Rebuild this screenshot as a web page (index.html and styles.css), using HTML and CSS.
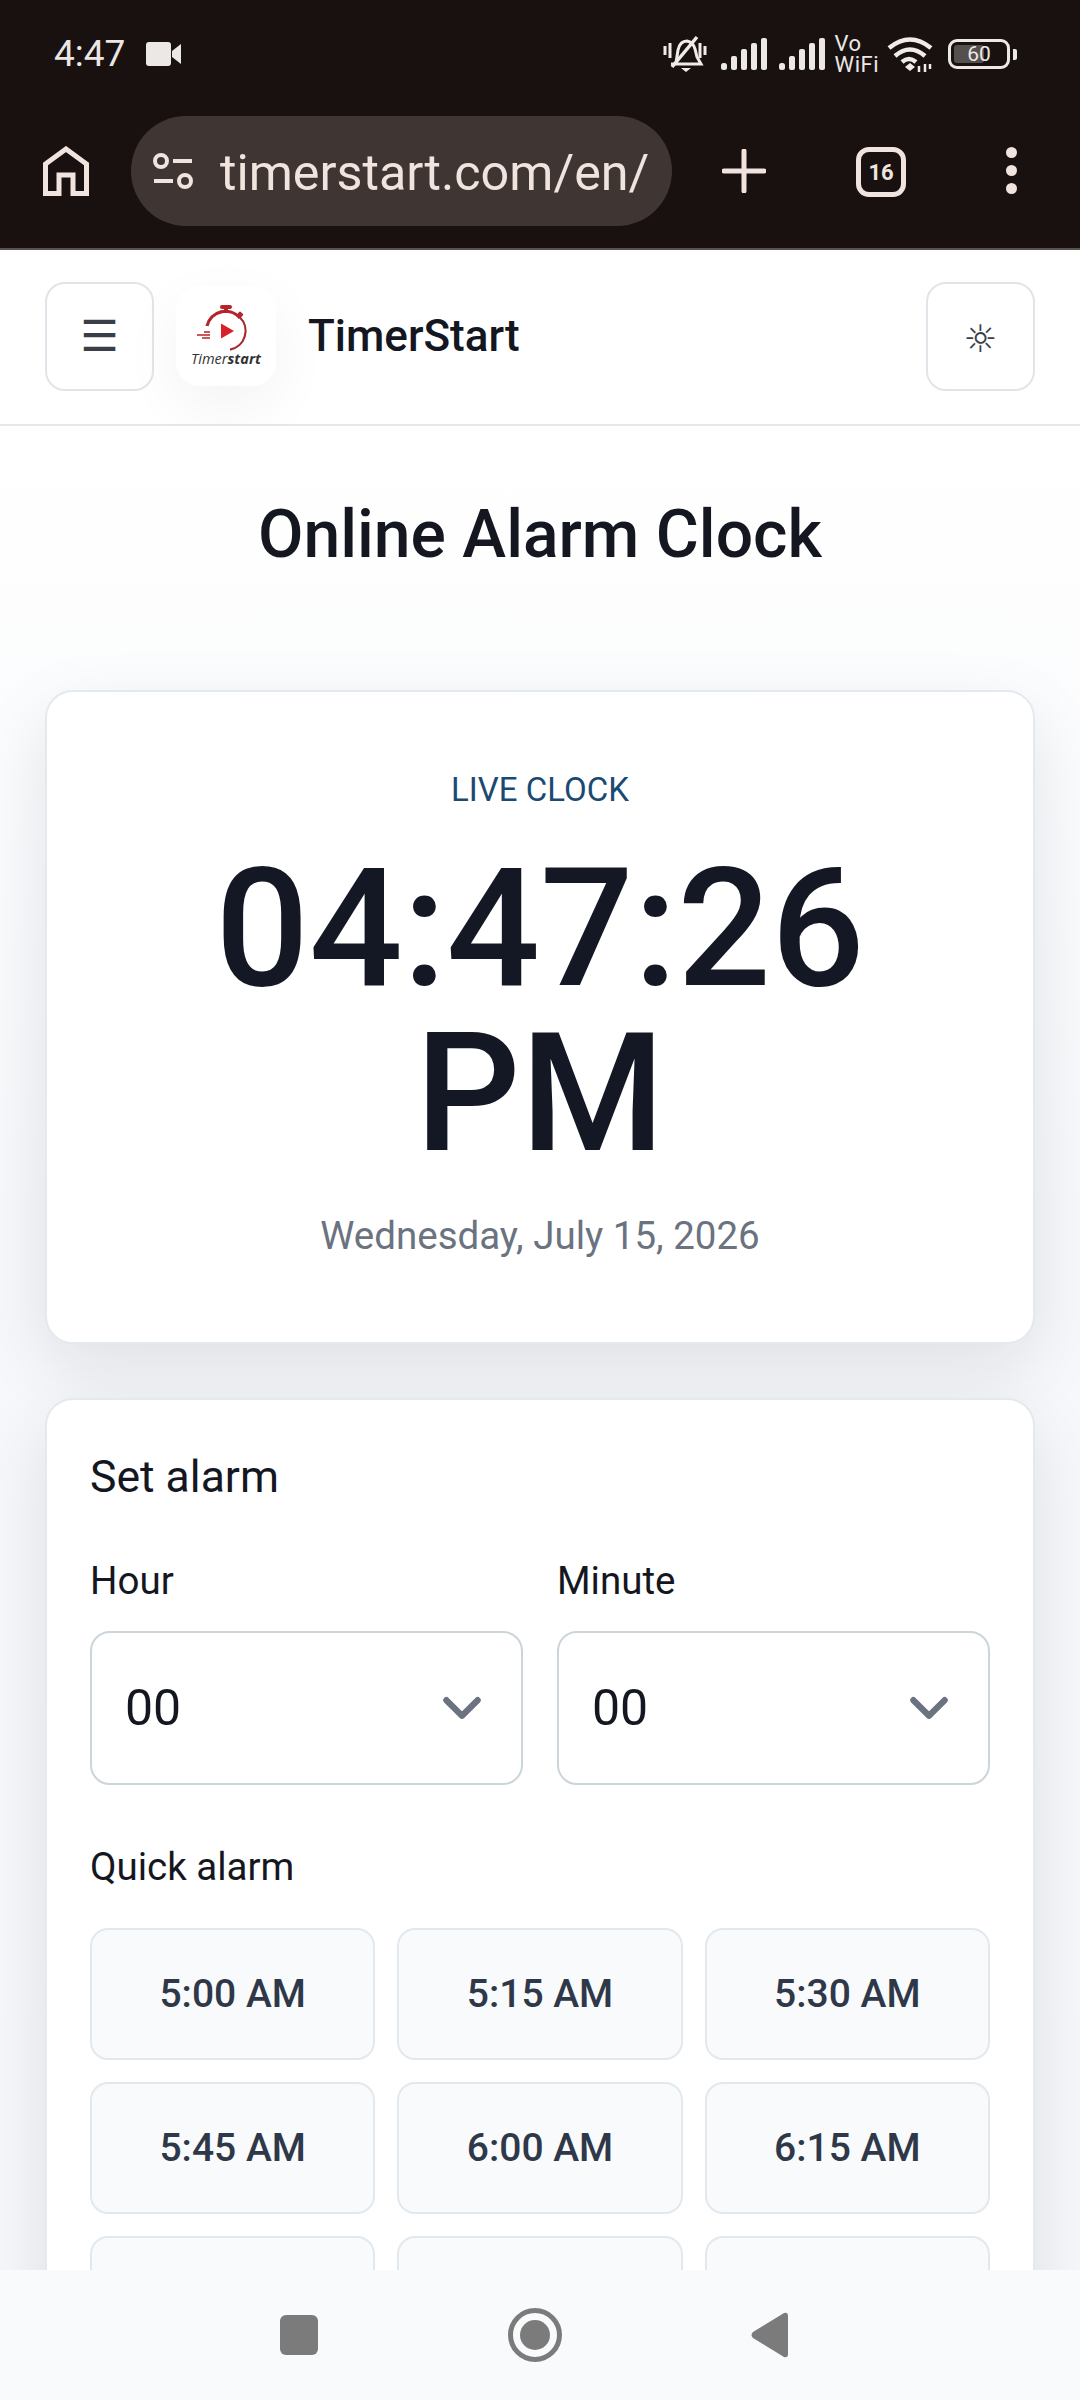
FILE: index.html
```html
<!DOCTYPE html>
<html lang="en">
<head>
<meta charset="utf-8">
<title>Online Alarm Clock</title>
<link rel="stylesheet" href="styles.css">
</head>
<body>
<div class="screen">
  <div class="chrome">
    <div class="status">
      <div class="status-left">
        <span class="status-time">4:47</span>
        <svg class="cam" viewBox="0 0 36 24"><rect x="0" y="0" width="25" height="24" rx="3"/><path d="M26 9 L35 2 V22 L26 15Z"/></svg>
      </div>
      <div class="status-right">
        <svg class="bell" viewBox="0 0 44 38" fill="none" stroke="#f0ebe8" stroke-width="3"><path d="M13 28 L15 15 Q17 6 24 6 Q30 7 32 14 L34 22 L38 29 H8"/><path d="M9 32 L34 2" stroke-width="3.5"/><path d="M18 33 H28 L23 37Z" fill="#f0ebe8" stroke="none"/><path d="M2 11 V20 M7 8 V23 M37 8 V23 M42 11 V20"/></svg>
        <svg class="signal" viewBox="0 0 46 32"><rect x="0" y="25" width="6" height="7" rx="2.5"/><rect x="10" y="18" width="6" height="14" rx="2"/><rect x="20" y="11" width="6" height="21" rx="2"/><rect x="30" y="5" width="6" height="27" rx="2"/><rect x="40" y="0" width="6" height="32" rx="2"/></svg>
        <svg class="signal" viewBox="0 0 46 32"><rect x="0" y="25" width="6" height="7" rx="2.5"/><rect x="10" y="18" width="6" height="14" rx="2"/><rect x="20" y="11" width="6" height="21" rx="2"/><rect x="30" y="5" width="6" height="27" rx="2"/><rect x="40" y="0" width="6" height="32" rx="2"/></svg>
        <span class="vowifi"><span>Vo</span><span>WiFi</span></span>
        <svg class="wifi" viewBox="0 0 46 36" fill="none" stroke="#f0ebe8" stroke-width="4.5"><path d="M2 12 Q23 -5 44 12"/><path d="M8 20 Q23 7 38 20"/><path d="M15 26 Q22 20 29 26"/><path d="M18 31 L23 27 L28 31 L23 35Z" fill="#f0ebe8" stroke="none"/><path d="M32 30 V36 M38 28 V36 M43 28 V33" stroke-width="2.5"/></svg>
        <div class="battery"><div class="battery-body"><span class="battery-fill"></span><span class="battery-num">60</span></div><span class="battery-tip"></span></div>
      </div>
    </div>
    <div class="toolbar">
      <svg class="home" viewBox="0 0 46 50" fill="none" stroke="#f1e4df" stroke-width="5"><path d="M2.5 47.5 V18 L23 3 L43.5 18 V47.5 H30 V29 H16 V47.5Z"/></svg>
      <div class="omnibox">
        <svg class="tune" viewBox="0 0 40 36" fill="none" stroke="#f1e4df" stroke-width="4"><circle cx="8" cy="8" r="6"/><path d="M20 8 H39 M1 28 H20"/><circle cx="32" cy="28" r="6"/></svg>
        <span class="url">timerstart.com/en/</span>
      </div>
      <svg class="plus" viewBox="0 0 44 44" fill="none" stroke="#f1e4df" stroke-width="5" stroke-linecap="round"><path d="M22 2 V42 M2 22 H42"/></svg>
      <div class="tabs">16</div>
      <div class="dots"><span></span><span></span><span></span></div>
    </div>
  </div>

  <header class="site-header">
    <button class="icon-btn menu-btn">☰</button>
    <div class="logo">
      <svg class="logo-mark" viewBox="0 0 60 48" fill="none">
        <path d="M11 22 A19 19 0 0 1 44 14" stroke="#b5252b" stroke-width="3.2"/>
        <path d="M43.5 13 A19 19 0 0 1 34 45.6" stroke="#a52a2e" stroke-width="2.2"/>
        <rect x="24" y="1" width="12" height="4" rx="2" fill="#b5252b"/>
        <rect x="28" y="4" width="4" height="5" fill="#b5252b"/>
        <rect x="42" y="8" width="5" height="5" rx="1" fill="#b5252b" transform="rotate(40 44 10)"/>
        <path d="M25 19.5 L38 27 L25 34.5Z" fill="#d9202a"/>
        <path d="M8 28 H14 M1 31 H14 M6 34 H14" stroke="#b5252b" stroke-width="1.5"/>
      </svg>
      <span class="logo-text">Timer<b>start</b></span>
    </div>
    <span class="brand">TimerStart</span>
    <button class="icon-btn sun-btn">☼</button>
  </header>

  <main class="page">
    <h1 class="title">Online Alarm Clock</h1>
    <section class="card clock-card">
      <div class="eyebrow">LIVE CLOCK</div>
      <div class="clock">04:47:26 PM</div>
      <div class="date">Wednesday, July 15, 2026</div>
    </section>
    <section class="card alarm-card">
      <h2 class="card-title">Set alarm</h2>
      <div class="selects">
        <div class="field">
          <span class="label">Hour</span>
          <div class="select"><span>00</span><svg class="chev" viewBox="0 0 36 24" fill="none" stroke="#6b7280" stroke-width="6" stroke-linecap="round" stroke-linejoin="round"><path d="M3 4 L18 19 L33 4"/></svg></div>
        </div>
        <div class="field">
          <span class="label">Minute</span>
          <div class="select"><span>00</span><svg class="chev" viewBox="0 0 36 24" fill="none" stroke="#6b7280" stroke-width="6" stroke-linecap="round" stroke-linejoin="round"><path d="M3 4 L18 19 L33 4"/></svg></div>
        </div>
      </div>
      <div class="label quick-label">Quick alarm</div>
      <div class="quick">
        <button class="q">5:00 AM</button><button class="q">5:15 AM</button><button class="q">5:30 AM</button>
        <button class="q">5:45 AM</button><button class="q">6:00 AM</button><button class="q">6:15 AM</button>
        <button class="q"></button><button class="q"></button><button class="q"></button>
      </div>
    </section>
  </main>

  <nav class="navbar">
    <span class="nav-square"></span>
    <span class="nav-circle"><span></span></span>
    <svg class="nav-back" viewBox="0 0 38 46"><path d="M2 20 L33 1 Q37 0 37 4 V42 Q37 46 33 45 L2 26 Q-1 23 2 20Z" fill="#7b7b7b"/></svg>
  </nav>
</div>
</body>
</html>
```
FILE: styles.css
```css
* { box-sizing: border-box; }
html, body { margin: 0; padding: 0; }
body { font-family: Roboto, "Liberation Sans", sans-serif; color: #14171f; background: #fff; }
.screen { position: relative; width: 1080px; height: 2400px; overflow: hidden; display: flex; flex-direction: column; }

.chrome { background: #181110; height: 250px; flex: none; border-bottom: 2px solid #5a524f; }
.status { height: 110px; display: flex; justify-content: space-between; align-items: center; padding: 0 63px 2px 54px; }
.status-left { display: flex; align-items: center; gap: 21px; }
.status-time { color: #ebe6e3; font-size: 37px; line-height: 40px; }
.cam { width: 36px; height: 24px; fill: #ebe8e6; }
.status-right { display: flex; align-items: center; }
.bell { width: 44px; height: 38px; margin-right: 14px; }
.signal { width: 46px; height: 32px; fill: #ebe8e6; margin-right: 12px; }
.signal + .vowifi { margin-left: -2px; }
.vowifi { display: flex; flex-direction: column; color: #ebe8e6; font-size: 22px; line-height: 21px; margin-right: 8px; letter-spacing: .5px; }
.wifi { width: 46px; height: 36px; margin-right: 15px; }
.battery { display: flex; align-items: center; gap: 3px; }
.battery-body { position: relative; height: 30px; border: 3px solid #ebe8e6; border-radius: 9px; display: flex; align-items: center; justify-content: center; overflow: hidden; width: 62px; }
.battery-fill { position: absolute; left: 3px; top: 3px; bottom: 3px; width: 30px; background: #554f4d; border-radius: 3px; }
.battery-num { position: relative; color: #ebe8e6; font-size: 21px; line-height: 24px; }
.battery-tip { width: 4px; height: 11px; background: #ebe8e6; border-radius: 0 2px 2px 0; }

.toolbar { height: 138px; display: flex; align-items: flex-start; padding: 6px 0 0 0; position: relative; }
.home { width: 46px; height: 50px; margin: 30px 0 0 43px; flex: none; }
.omnibox { width: 541px; height: 110px; margin-left: 42px; background: #3f3634; border-radius: 55px; display: flex; align-items: center; padding-left: 22px; flex: none; }
.tune { width: 40px; height: 36px; flex: none; }
.url { color: #f1e4df; font-size: 50.3px; margin: 4px 0 0 27px; white-space: nowrap; line-height: 60px; }
.plus { width: 44px; height: 44px; margin: 33px 0 0 50px; flex: none; }
.tabs { width: 50px; height: 50px; margin: 31px 0 0 90px; border: 5px solid #f1e4df; border-radius: 13px; color: #f1e4df; font-size: 22px; font-weight: 700; display: flex; align-items: center; justify-content: center; flex: none; }
.dots { margin: 31px 0 0 100px; display: flex; flex-direction: column; gap: 7px; flex: none; }
.dots span { width: 11px; height: 11px; border-radius: 50%; background: #f1e4df; display: block; }

.site-header { height: 176px; flex: none; background: #fff; border-bottom: 2px solid #e5e7eb; display: flex; align-items: center; padding: 0 45px 2px; }
.icon-btn { width: 109px; height: 109px; border: 2px solid #e2e4ea; border-radius: 20px; background: #fff; font-family: "DejaVu Sans", sans-serif; padding: 0; flex: none; }
.menu-btn { font-size: 43px; color: #3a3f47; }
.sun-btn { font-size: 38px; margin-left: auto; color: #3a3f47; padding-top: 5px; }
.logo { width: 100px; height: 100px; margin-left: 22px; border-radius: 24px; background: #fff; box-shadow: 0 20px 60px rgba(17, 24, 39, .05); display: flex; flex-direction: column; align-items: center; padding-top: 18px; flex: none; }
.logo-mark { width: 60px; height: 48px; display: block; }
.logo-text { font-family: "Open Sans", sans-serif; font-style: italic; font-size: 14.5px; line-height: 16px; color: #333; white-space: nowrap; margin-top: -1px; }
.logo-text b { font-weight: 700; }
.brand { font-size: 44px; font-weight: 500; margin-left: 32px; color: #14171f; }

.page { flex: 1; min-height: 0; padding: 0 45px; background: linear-gradient(180deg, #ffffff 0%, #f6f8fb 40%, #f6f7fa 100%); }
.title { margin: 71px 0 0; text-align: center; font-size: 66px; line-height: 76px; font-weight: 500; color: #14171f; }
.card { background: #fff; border: 2px solid #e4e9ef; border-radius: 28px; box-shadow: 0 24px 70px rgba(17, 24, 39, .1); }
.clock-card { margin-top: 117px; height: 654px; text-align: center; padding-top: 78px; }
.eyebrow { font-size: 33px; line-height: 40px; color: #1a4a72; }
.clock { font-size: 165px; line-height: 165px; font-weight: 500; color: #141824; margin-top: 36px; padding: 0 60px; }
.date { font-size: 38.5px; line-height: 46px; color: #6b7280; margin-top: 37px; }
.alarm-card { margin-top: 54px; padding: 0 43px; height: 1200px; }
.card-title { margin: 52px 0 0; font-size: 44.5px; line-height: 50px; font-weight: 400; color: #14171f; }
.selects { display: grid; grid-template-columns: 1fr 1fr; gap: 34px; margin-top: 58px; }
.field { display: flex; flex-direction: column; }
.label { font-size: 38.5px; line-height: 42px; color: #14171f; }
.select { margin-top: 29px; height: 154px; border: 2px solid #ccd5da; border-radius: 20px; display: flex; align-items: center; justify-content: space-between; padding: 0 40px 0 33px; font-size: 50px; background: #fff; }
.chev { width: 38px; height: 25px; }
.quick-label { margin-top: 61px; }
.quick { display: grid; grid-template-columns: repeat(3, 1fr); gap: 22px; margin-top: 40px; }
.q { height: 132px; border: 2px solid #e2e9ee; border-radius: 18px; background: #f8fafc; font-family: Roboto, sans-serif; font-size: 39px; font-weight: 500; color: #2f3848; padding: 0; }

.navbar { position: absolute; left: 0; right: 0; bottom: 0; height: 130px; background: #f8fafc; display: flex; align-items: center; justify-content: center; }
.nav-square { width: 38px; height: 40px; background: #7b7b7b; border-radius: 6px; position: absolute; left: 280px; top: 45px; }
.nav-circle { width: 54px; height: 54px; border: 5px solid #7b7b7b; border-radius: 50%; display: flex; align-items: center; justify-content: center; position: absolute; left: 508px; top: 38px; }
.nav-circle span { width: 30px; height: 30px; background: #7b7b7b; border-radius: 50%; }
.nav-back { width: 38px; height: 46px; position: absolute; left: 751px; top: 42px; }
```
